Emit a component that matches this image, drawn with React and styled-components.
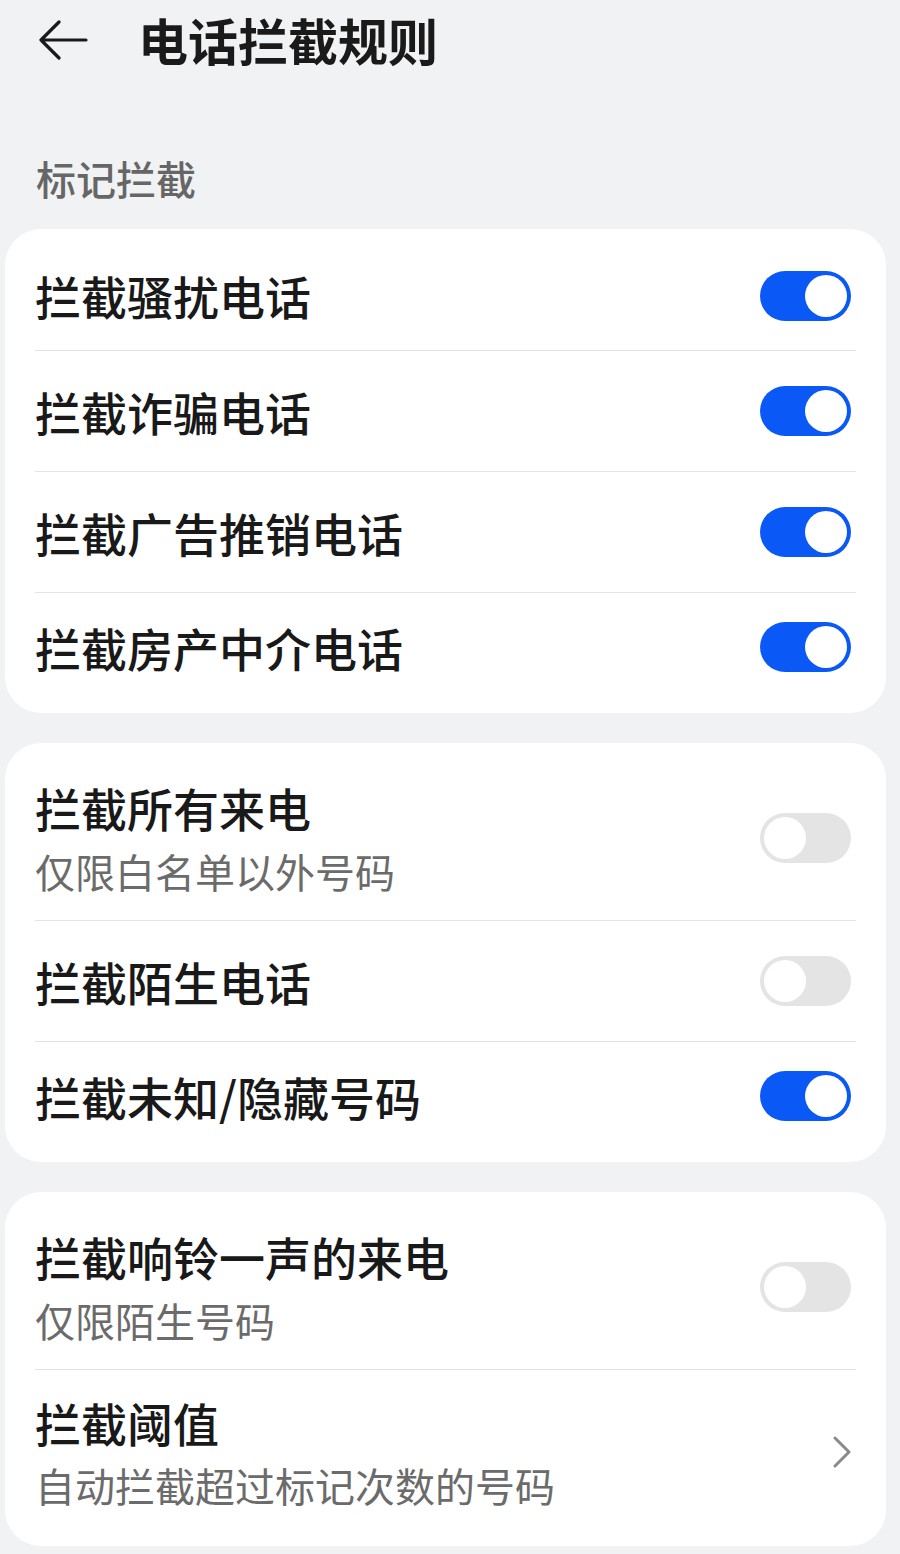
import React from 'react';
import styled, { createGlobalStyle } from 'styled-components';

const GlobalStyle = createGlobalStyle`
  html, body {
    margin: 0;
    padding: 0;
    background: #f1f2f4;
  }
  body {
    font-family: "Noto Sans CJK SC", "Noto Sans", sans-serif;
  }
`;

const groups = [
  {
    items: [
      { title: '拦截骚扰电话', on: true },
      { title: '拦截诈骗电话', on: true },
      { title: '拦截广告推销电话', on: true },
      { title: '拦截房产中介电话', on: true },
    ],
  },
  {
    items: [
      { title: '拦截所有来电', sub: '仅限白名单以外号码', on: false },
      { title: '拦截陌生电话', on: false },
      { title: '拦截未知/隐藏号码', on: true },
    ],
  },
  {
    items: [
      { title: '拦截响铃一声的来电', sub: '仅限陌生号码', on: false },
      { title: '拦截阈值', sub: '自动拦截超过标记次数的号码', link: true },
    ],
  },
];

const App = () => (
  <Page>
    <GlobalStyle />
    <TopBar>
      <BackButton>
        <svg width="50" height="40" viewBox="0 0 50 40" fill="none">
          <path
            d="M48 20H3M21 2L3 20L21 38"
            stroke="#1a1a1a"
            strokeWidth="3.2"
            strokeLinecap="round"
            strokeLinejoin="round"
          />
        </svg>
      </BackButton>
      <Title>电话拦截规则</Title>
    </TopBar>
    <SectionLabel>标记拦截</SectionLabel>
    <Cards>
      {groups.map((group, gi) => (
        <Card key={gi}>
          {group.items.map((item) => (
            <Row key={item.title} tall={!!item.sub}>
              <RowText>
                <RowTitle>{item.title}</RowTitle>
                {item.sub && <RowSub>{item.sub}</RowSub>}
              </RowText>
              {item.link ? (
                <Chevron>
                  <svg width="20" height="32" viewBox="0 0 20 32" fill="none">
                    <path
                      d="M3 2L17 16L3 30"
                      stroke="#8a8a8a"
                      strokeWidth="3"
                      strokeLinecap="round"
                      strokeLinejoin="round"
                    />
                  </svg>
                </Chevron>
              ) : (
                <Switch on={item.on}>
                  <Knob />
                </Switch>
              )}
            </Row>
          ))}
        </Card>
      ))}
    </Cards>
  </Page>
);

const Page = styled.div`
  padding-bottom: 9px;
`;

const TopBar = styled.div`
  display: flex;
  align-items: center;
  height: 80px;
  padding-left: 38px;
`;

const BackButton = styled.div`
  display: flex;
  align-items: center;
  width: 100px;
`;

const Title = styled.h1`
  margin: -3px 0 0;
  font-size: 50px;
  font-weight: 700;
  color: #1a1a1a;
  line-height: 1;
`;

const SectionLabel = styled.div`
  margin: 78px 0 31px 36px;
  font-size: 40px;
  line-height: 40px;
  color: #666;
  font-weight: 500;
`;

const Cards = styled.div`
  display: flex;
  flex-direction: column;
  gap: 30px;
  margin-left: 5px;
  width: 881px;
`;

const Card = styled.div`
  background: #fff;
  border-radius: 36px;
  padding: 12px 30px;
`;

const Row = styled.div`
  display: flex;
  align-items: center;
  justify-content: space-between;
  height: ${(p) => (p.tall ? 177 : 121)}px;
  box-sizing: border-box;

  &:first-child,
  &:last-child {
    height: ${(p) => (p.tall ? 165 : 109)}px;
  }

  & + & {
    border-top: 1.5px solid #e3e3e3;
  }
`;

const RowText = styled.div`
  display: flex;
  flex-direction: column;
  gap: 16px;
`;

const RowTitle = styled.div`
  font-size: 46px;
  line-height: 1.1;
  font-weight: 500;
  color: #191919;
`;

const RowSub = styled.div`
  font-size: 40px;
  line-height: 1.1;
  color: #6b6b6b;
`;

const Switch = styled.div`
  display: flex;
  align-items: center;
  justify-content: ${(p) => (p.on ? 'flex-end' : 'flex-start')};
  width: 91px;
  height: 50px;
  margin-right: 5px;
  padding: 4px;
  box-sizing: border-box;
  border-radius: 25px;
  background: ${(p) => (p.on ? '#0a59f7' : '#e4e4e4')};
`;

const Knob = styled.div`
  width: 42px;
  height: 42px;
  border-radius: 50%;
  background: #fff;
`;

const Chevron = styled.div`
  display: flex;
  align-items: center;
  padding-right: 4px;
`;

export default App;
